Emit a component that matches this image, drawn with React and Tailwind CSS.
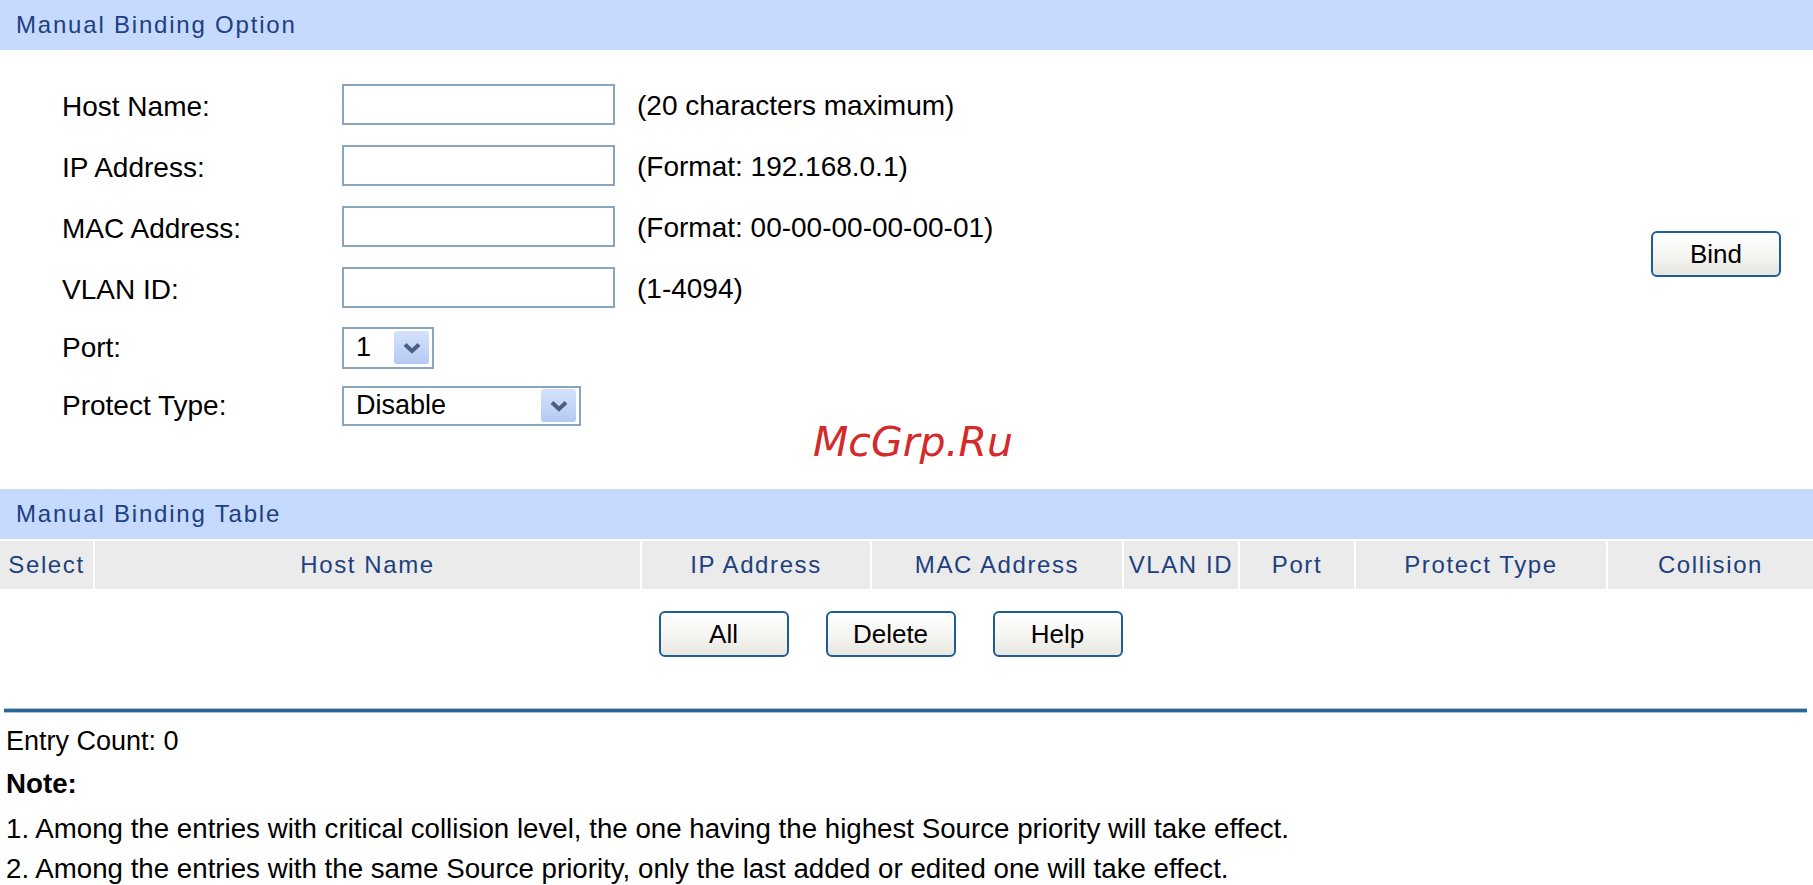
import React from 'react';

const fields = [
  { label: 'Host Name:', hint: '(20 characters maximum)' },
  { label: 'IP Address:', hint: '(Format: 192.168.0.1)' },
  { label: 'MAC Address:', hint: '(Format: 00-00-00-00-00-01)' },
  { label: 'VLAN ID:', hint: '(1-4094)' },
];

const columns = [
  { name: 'Select', w: 'w-[93px]' },
  { name: 'Host Name', w: 'w-[545px]' },
  { name: 'IP Address', w: 'w-[228px]' },
  { name: 'MAC Address', w: 'w-[250px]' },
  { name: 'VLAN ID', w: 'w-[114px]' },
  { name: 'Port', w: 'w-[114px]' },
  { name: 'Protect Type', w: 'w-[250px]' },
  { name: 'Collision', w: 'flex-1' },
];

function Chevron() {
  return (
    <svg width="20" height="14" viewBox="0 0 20 14">
      <path d="M3 3.5 L10 10 L17 3.5" fill="none" stroke="#4b5f86" strokeWidth="4" />
    </svg>
  );
}

function SelectBox({ value, width }) {
  return (
    <div className={`${width} flex items-center justify-between border-2 border-[#8aa5c0] bg-white pl-[12px] pr-[3px]`}>
      <span className="text-[27px] text-black">{value}</span>
      <div className="flex h-[33px] w-[35px] items-center justify-center rounded-[3px] bg-gradient-to-b from-[#d5e2fb] to-[#b4c9f3]">
        <Chevron />
      </div>
    </div>
  );
}

function XpButton({ children }) {
  return (
    <button className="flex h-[46px] w-[130px] items-center justify-center rounded-[6px] border-2 border-[#1f5c93] bg-gradient-to-b from-white via-[#f6f6f3] to-[#e7e6df] text-[26px] text-black">
      {children}
    </button>
  );
}

function SectionBar({ title }) {
  return (
    <div className="flex h-[50px] items-center bg-[#c6d9fe] pl-[16px]">
      <span className="text-[24px] tracking-[1.8px] text-[#203f7f]">{title}</span>
    </div>
  );
}

export default function App() {
  return (
    <div className="relative h-[885px] w-[1813px] overflow-hidden bg-white font-['Liberation_Sans',Arial,sans-serif]">
      <SectionBar title="Manual Binding Option" />

      {/* Binding form */}
      <div className="flex items-center pt-[24px] pb-[55px] pr-[32px]">
        <div className="flex-1">
          {fields.map((f) => (
            <div key={f.label} className="flex h-[61px] items-center">
              <div className="w-[342px] pl-[62px] pt-[4px] text-[28px] text-black">{f.label}</div>
              <div className="h-[41px] w-[273px] border-2 border-[#8aa5c0] bg-white" />
              <div className="pl-[22px] pt-[2px] text-[28px] text-black">{f.hint}</div>
            </div>
          ))}
          <div className="flex h-[59px] items-center">
            <div className="w-[342px] pl-[62px] text-[28px] text-black">Port:</div>
            <div className="flex h-[42px]">
              <SelectBox value="1" width="w-[92px]" />
            </div>
          </div>
          <div className="flex h-[57px] items-center">
            <div className="w-[342px] pl-[62px] text-[28px] text-black">Protect Type:</div>
            <div className="flex h-[40px]">
              <SelectBox value="Disable" width="w-[239px]" />
            </div>
          </div>
        </div>
        <XpButton>Bind</XpButton>
      </div>

      {/* Binding table */}
      <SectionBar title="Manual Binding Table" />
      <div className="mt-[2px] flex h-[48px] gap-[2px]">
        {columns.map((c) => (
          <div key={c.name} className={`${c.w} flex items-center justify-center bg-[#ebebeb] text-[24px] tracking-[1.6px] text-[#203f7f]`}>
            {c.name}
          </div>
        ))}
      </div>

      <div className="flex justify-center gap-[37px] pt-[22px] pr-[32px]">
        <XpButton>All</XpButton>
        <XpButton>Delete</XpButton>
        <XpButton>Help</XpButton>
      </div>

      <div className="mt-[51px] ml-[4px] mr-[6px] h-[5px] border-y border-[#a9c5dd] bg-[#2c6593]" />

      <div className="pl-[6px] pt-[11px] text-[27.7px] leading-[34px] text-black">
        <div className="text-[27px]">Entry Count: 0</div>
        <div className="mt-[9px] font-bold">Note:</div>
        <div className="mt-[11px]">1. Among the entries with critical collision level, the one having the highest Source priority will take effect.</div>
        <div className="mt-[6px]">2. Among the entries with the same Source priority, only the last added or edited one will take effect.</div>
      </div>

      {/* watermark */}
      <div className="absolute left-[813px] top-[412px] font-['DejaVu_Sans',sans-serif] text-[41px] italic text-[#d42a2a]">
        McGrp.Ru
      </div>
    </div>
  );
}
